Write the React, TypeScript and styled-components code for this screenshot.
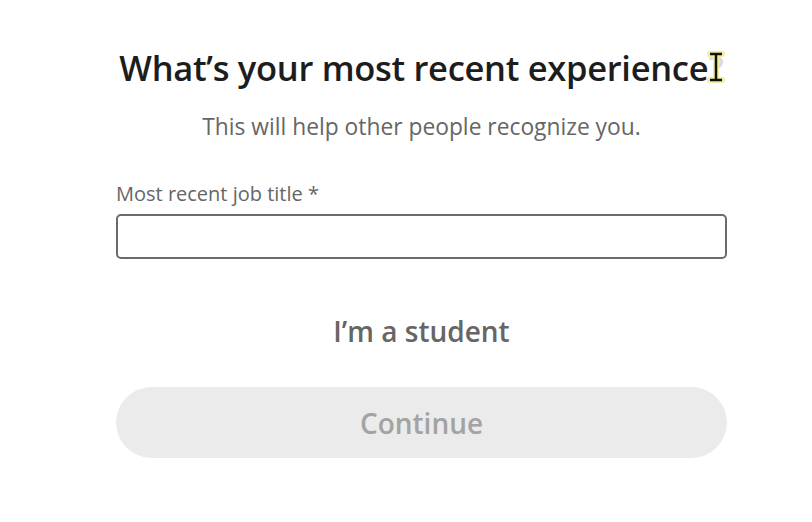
import React from "react";
import styled, { createGlobalStyle } from "styled-components";

const Global = createGlobalStyle`
  html, body { margin: 0; padding: 0; background: #ffffff; }
  body { font-family: "Open Sans", "Noto Sans", sans-serif; }
`;

const Page = styled.div`
  width: 812px;
  height: 522px;
  box-sizing: border-box;
  padding: 44px 85px 0 116px;
  background: #fff;
`;

const Column = styled.div`
  width: 611px;
  display: flex;
  flex-direction: column;
  align-items: stretch;
`;

const HeadingWrap = styled.div`
  position: relative;
  text-align: center;
`;

const Heading = styled.h1`
  margin: 0;
  font-size: 34.5px;
  font-weight: 600;
  color: #1d1d1d;
  line-height: 48px;
  letter-spacing: -0.3px;
  white-space: nowrap;
`;

const Cursor = styled.svg`
  position: absolute;
  left: 591px;
  top: 7px;
`;

const Sub = styled.p`
  margin: 20px 0 0;
  text-align: center;
  font-size: 22.8px;
  color: #666;
  line-height: 30px;
  white-space: nowrap;
`;

const Label = styled.label`
  margin-top: 39px;
  font-size: 20px;
  color: #666;
  line-height: 26px;
`;

const Input = styled.input`
  margin-top: 7px;
  height: 45px;
  box-sizing: border-box;
  border: 2px solid #6b6b6b;
  border-radius: 5px;
  outline: none;
  font-size: 18px;
  padding: 0 12px;
  background: #fff;
`;

const Student = styled.button`
  margin-top: 54px;
  align-self: center;
  background: none;
  border: none;
  padding: 0;
  font-family: inherit;
  font-size: 28px;
  font-weight: 600;
  color: #666;
  line-height: 36px;
`;

const Continue = styled.button`
  margin-top: 38px;
  height: 71px;
  border: none;
  border-radius: 36px;
  background: #ebebeb;
  color: #a3a3a3;
  font-family: inherit;
  font-size: 28px;
  font-weight: 600;
  padding: 0;
`;

export default function App() {
  return (
    <>
      <Global />
      <Page>
        <Column>
          <HeadingWrap>
            <Heading>What’s your most recent experience?</Heading>
            <Cursor width="18" height="32" viewBox="0 0 18 32">
              <rect x="1" y="1" width="16" height="30" fill="#fff" opacity="0.85" />
              <path d="M3 3h12M3 29h12M9 3v26" stroke="#f2eea0" strokeWidth="6" fill="none" strokeLinecap="round" />
              <path d="M3 3h12M3 29h12M9 3v26" stroke="#111" strokeWidth="2.5" fill="none" />
            </Cursor>
          </HeadingWrap>
          <Sub>This will help other people recognize you.</Sub>
          <Label>Most recent job title *</Label>
          <Input />
          <Student>I’m a student</Student>
          <Continue disabled>Continue</Continue>
        </Column>
      </Page>
    </>
  );
}
